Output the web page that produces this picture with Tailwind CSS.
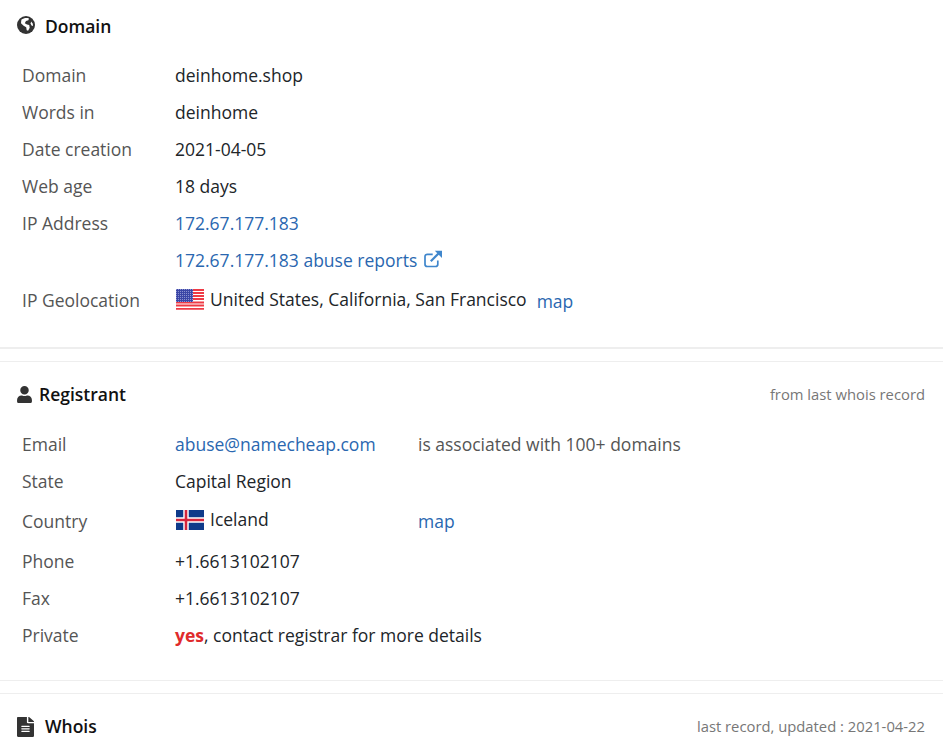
<!DOCTYPE html>
<html lang="en">
<head>
  <meta charset="UTF-8" />
  <title>deinhome.shop</title>
  <script src="https://cdn.jsdelivr.net/npm/@tailwindcss/browser@4"></script>
</head>
<body class="h-[745px] overflow-hidden bg-white font-['Open_Sans',sans-serif] text-[17.5px] text-[#212529]">

  <!-- Domain -->
  <section class="h-[349px] border-b-2 border-[#eeeeee]">
    <div class="h-[52px] flex items-center px-[17px] gap-[10px] text-[#111]">
      <svg class="w-[18px] h-[18px] mb-[2px]" viewBox="0 0 18 18"><circle cx="9" cy="9" r="9" fill="#333"/><path d="M4.5 3.6C6.5 2 9.5 1.5 12 2.4l-.6 1.8-2.4.9-1.2 2.2 2.2 1.3 2.2.5.5 2.6-1.6 3-1.4-.4-.5-3-2.6-1.5-2.6-2.5.2-2.2z" fill="#fff"/><path d="M14.2 5.5l1.6 2.2.2 2.3-1.5-.6-.9-2z" fill="#fff"/></svg>
      <h2 class="font-semibold">Domain</h2>
    </div>
    <div class="mt-[5px] pl-[22px]">
      <div class="h-[37px] flex items-center"><span class="w-[153px] text-[#555]">Domain</span><span>deinhome.shop</span></div>
      <div class="h-[37px] flex items-center"><span class="w-[153px] text-[#555]">Words in</span><span>deinhome</span></div>
      <div class="h-[37px] flex items-center"><span class="w-[153px] text-[#555]">Date creation</span><span>2021-04-05</span></div>
      <div class="h-[37px] flex items-center"><span class="w-[153px] text-[#555]">Web age</span><span>18 days</span></div>
      <div class="h-[37px] flex items-center"><span class="w-[153px] text-[#555]">IP Address</span><a href="#" class="text-[#2a67b0]">172.67.177.183</a></div>
      <div class="h-[36px] flex items-center">
        <span class="w-[153px]"></span>
        <a href="#" class="text-[#2a67b0] flex items-center gap-[7px]">172.67.177.183 abuse reports
          <svg class="w-[18px] h-[18px] mb-[3px]" viewBox="0 0 18 18" fill="none" stroke="#3f86cc" stroke-width="1.7"><path d="M13.8 10.5v3.7a2.3 2.3 0 0 1-2.3 2.3H3.3A2.3 2.3 0 0 1 1 14.2V6.6a2.3 2.3 0 0 1 2.3-2.3h5.4"/><path d="M6.8 11.2 15.5 2.5" stroke-width="2.2"/><path d="M10.8.8H18v7.2z" fill="#3f86cc" stroke="none"/></svg>
        </a>
      </div>
      <div class="h-[44px] flex items-center">
        <span class="w-[154px] text-[#555]">IP Geolocation</span>
        <span class="flex items-center gap-[6px] mb-[2px]">
          <svg class="w-[28px] h-[21px]" viewBox="0 0 28 21">
            <defs><pattern id="stars" width="2" height="2" patternUnits="userSpaceOnUse"><rect width="2" height="2" fill="#3b46a6"/><rect width="1" height="1" fill="#8a90cf"/></pattern></defs>
            <rect width="28" height="21" fill="#fff"/><path d="M0 1h28M0 4h28M0 7h28M0 10h28M0 13.5h28M0 16.5h28M0 19.8h28" stroke="#ee3a45" stroke-width="1.8"/><rect width="17" height="13" fill="url(#stars)"/></svg>
          <span>United States, California, San Francisco</span>
        </span>
        <a href="#" class="text-[#2a67b0] ml-[10px] mt-[2px]">map</a>
      </div>
    </div>
  </section>

  <!-- Registrant -->
  <section class="mt-[12px] h-[320px] border-t border-b border-[#eeeeee]">
    <div class="h-[64px] flex items-center justify-between pl-[17px] pr-[18px]">
      <div class="flex items-center gap-[7px] text-[#111]">
        <svg class="w-[15px] h-[17px] fill-[#333]" viewBox="0 0 448 512"><path d="M224 256c70.7 0 128-57.3 128-128S294.7 0 224 0 96 57.3 96 128s57.3 128 128 128zm89.6 32h-16.7c-22.2 10.2-46.9 16-72.9 16s-50.6-5.8-72.9-16h-16.7C60.2 288 0 348.2 0 422.4V464c0 26.5 21.5 48 48 48h352c26.5 0 48-21.5 48-48v-41.6c0-74.2-60.2-134.4-134.4-134.4z"/></svg>
        <h2 class="font-semibold">Registrant</h2>
      </div>
      <span class="text-[14.8px] text-[#777]">from last whois record</span>
    </div>
    <div class="pl-[22px]">
      <div class="h-[37px] flex items-center"><span class="w-[153px] text-[#555]">Email</span><a href="#" class="w-[243px] text-[#2a67b0]">abuse@namecheap.com</a><span class="text-[#555]">is associated with 100+ domains</span></div>
      <div class="h-[37px] flex items-center"><span class="w-[153px] text-[#555]">State</span><span>Capital Region</span></div>
      <div class="h-[43px] flex items-center">
        <span class="w-[153px] text-[#555]">Country</span>
        <span class="w-[243px] flex items-center gap-[6px] mb-[4px] pl-[1px]">
          <svg class="w-[28px] h-[20px]" viewBox="0 0 28 20"><rect width="28" height="20" fill="#0f3a8a"/><path d="M10 0v20M0 10h28" stroke="#fff" stroke-width="5.5"/><path d="M10 0v20M0 10h28" stroke="#d7263d" stroke-width="2.6"/></svg>
          Iceland
        </span>
        <a href="#" class="text-[#2a67b0]">map</a>
      </div>
      <div class="h-[37px] flex items-center"><span class="w-[153px] text-[#555]">Phone</span><span>+1.6613102107</span></div>
      <div class="h-[37px] flex items-center"><span class="w-[153px] text-[#555]">Fax</span><span>+1.6613102107</span></div>
      <div class="h-[37px] flex items-center"><span class="w-[153px] text-[#555]">Private</span><span><b class="font-bold text-[#e02b2b]">yes</b>, contact registrar for more details</span></div>
    </div>
  </section>

  <!-- Whois -->
  <section class="mt-[12px] border-t border-[#eeeeee]">
    <div class="h-[65px] flex items-center justify-between pl-[17px] pr-[18px]">
      <div class="flex items-center gap-[11px] text-[#111]">
        <svg class="w-[17px] h-[20px] fill-[#333]" viewBox="0 0 384 512" preserveAspectRatio="none"><path d="M224 136V0H24C10.7 0 0 10.7 0 24v464c0 13.3 10.7 24 24 24h336c13.3 0 24-10.7 24-24V160H248c-13.2 0-24-10.8-24-24zm64 236c0 6.6-5.4 12-12 12H108c-6.6 0-12-5.4-12-12v-8c0-6.6 5.4-12 12-12h168c6.6 0 12 5.4 12 12v8zm0-64c0 6.6-5.4 12-12 12H108c-6.6 0-12-5.4-12-12v-8c0-6.6 5.4-12 12-12h168c6.6 0 12 5.4 12 12v8zm0-72v8c0 6.6-5.4 12-12 12H108c-6.6 0-12-5.4-12-12v-8c0-6.6 5.4-12 12-12h168c6.6 0 12 5.4 12 12zm96-114.1v6.1H256V0h6.1c6.4 0 12.5 2.5 17 7l97.9 98c4.5 4.5 7 10.6 7 16.9z"/></svg>
        <h2 class="font-semibold">Whois</h2>
      </div>
      <span class="text-[14.8px] text-[#777]">last record, updated : 2021-04-22</span>
    </div>
  </section>
</body>
</html>
